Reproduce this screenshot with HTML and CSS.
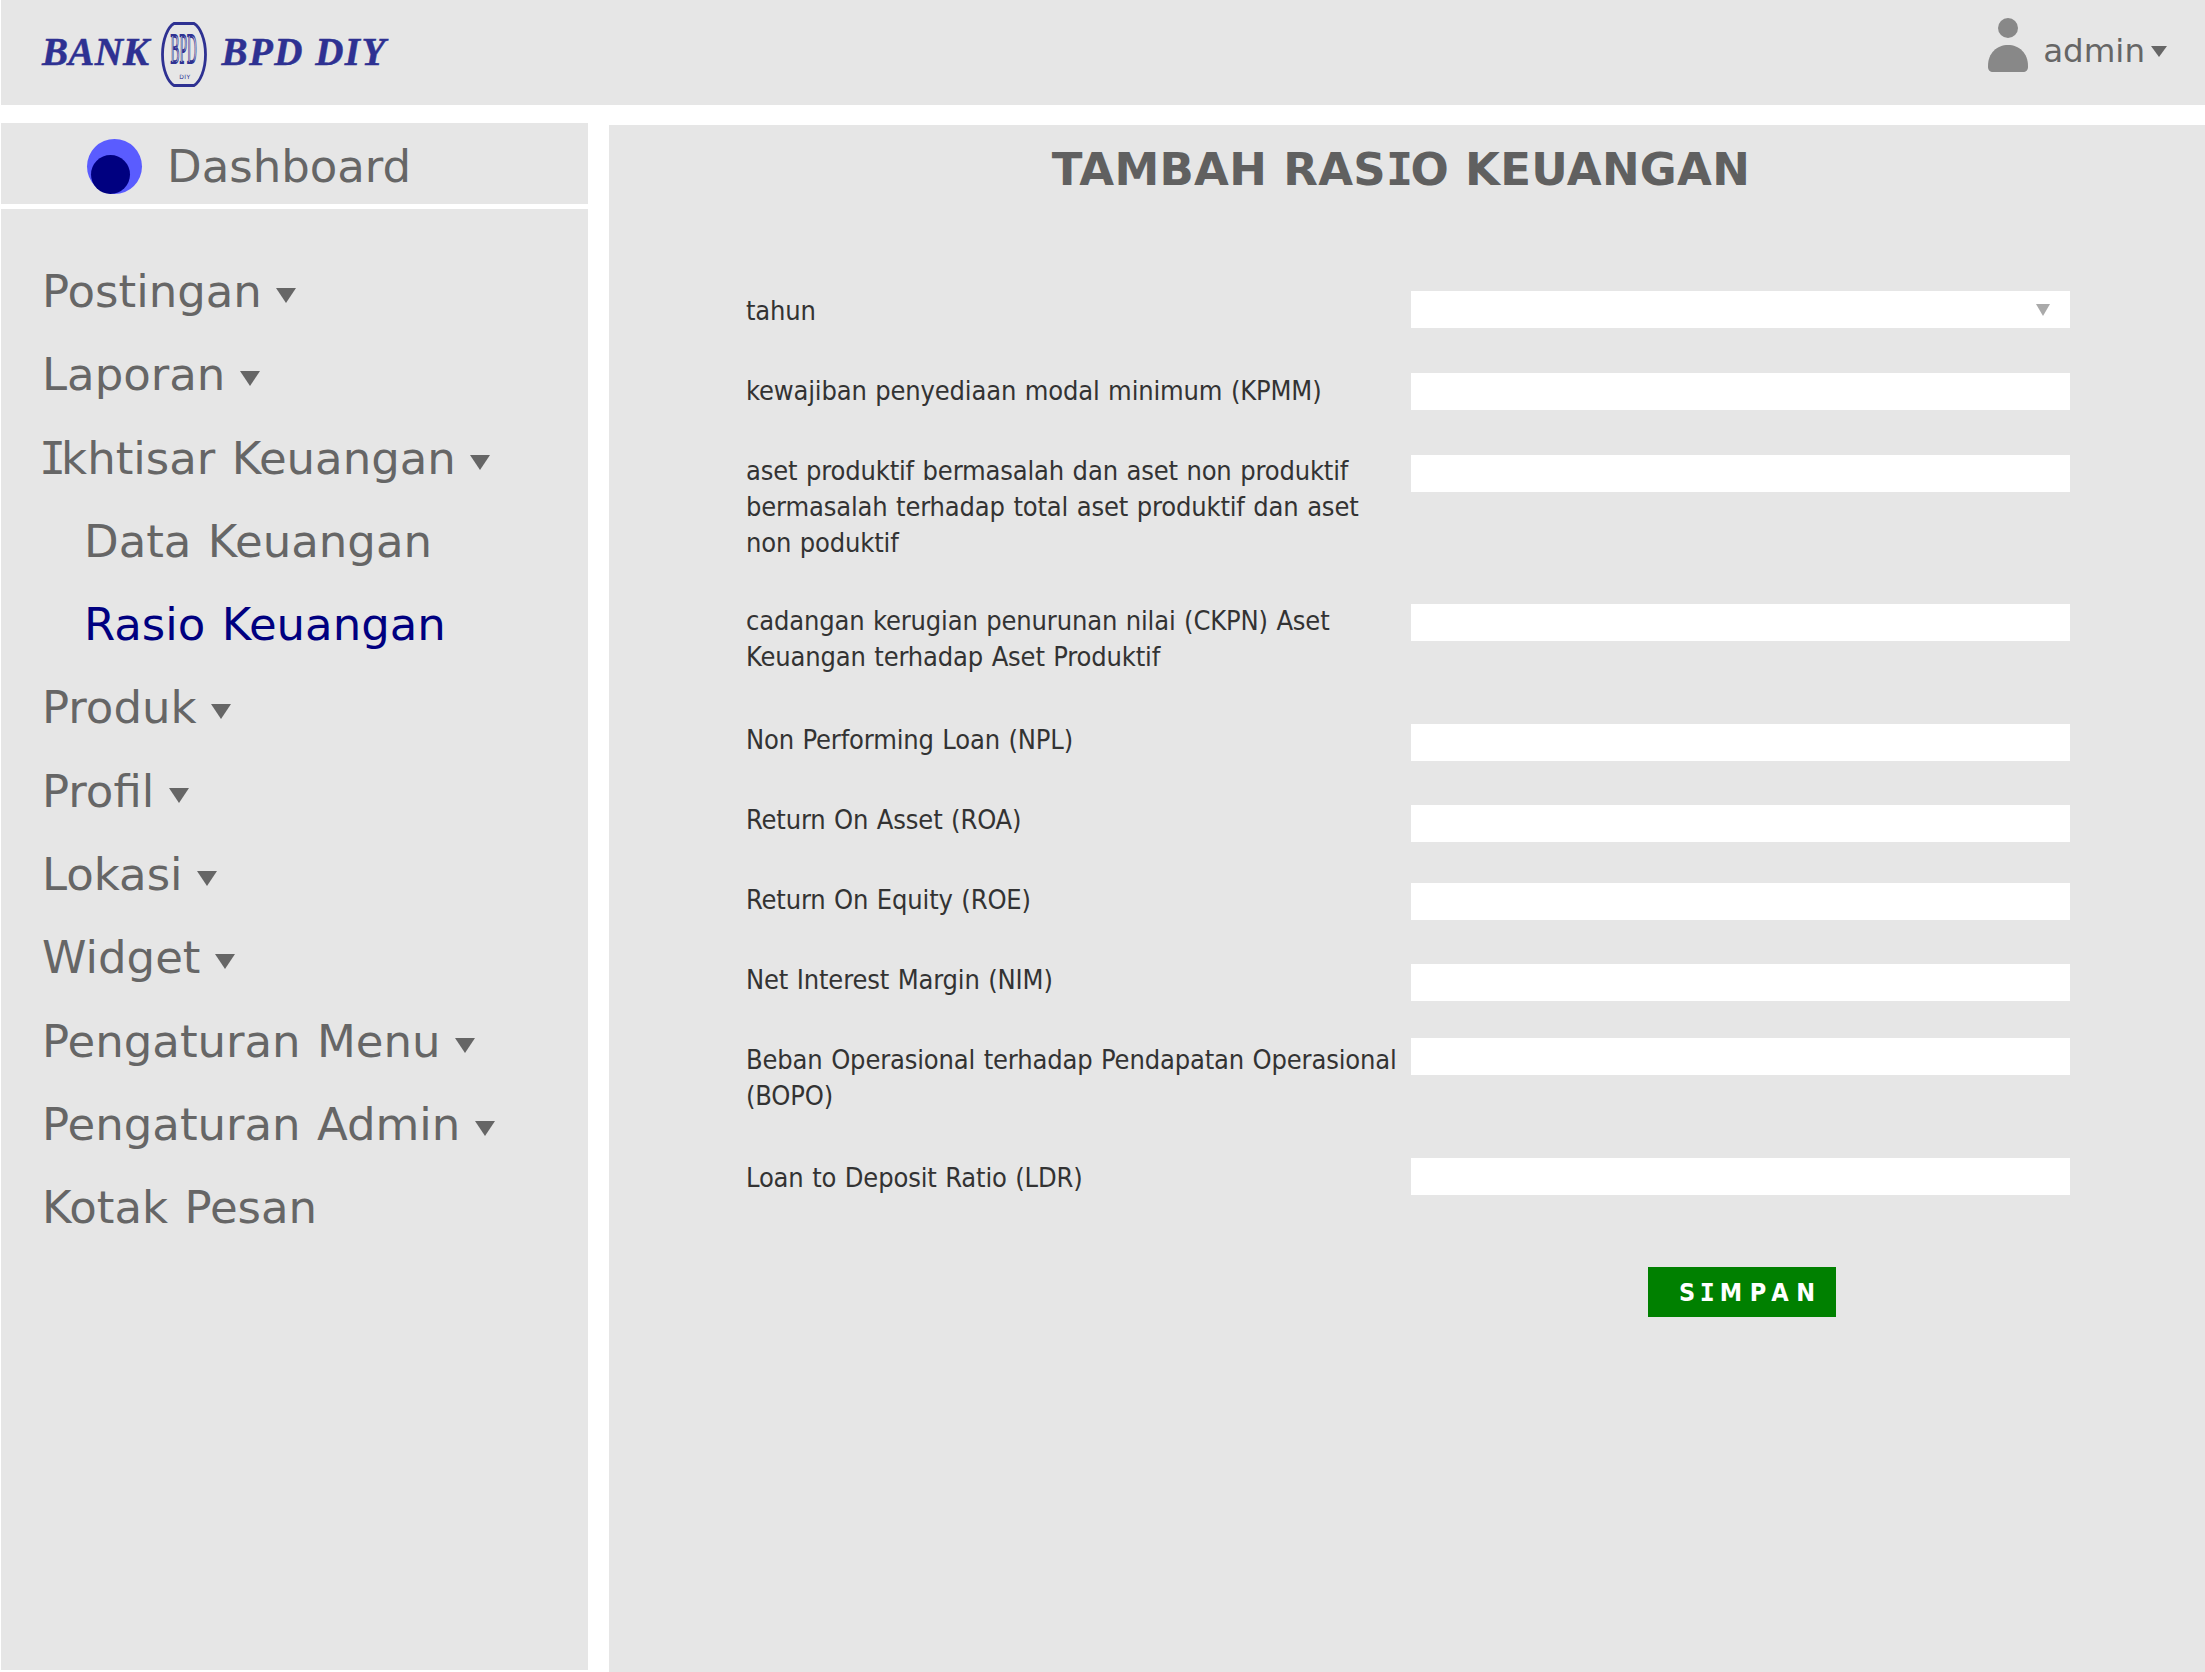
FILE: index.html
```html
<!DOCTYPE html>
<html lang="id">
<head>
<meta charset="utf-8">
<title>Tambah Rasio Keuangan</title>
<link rel="stylesheet" href="styles.css">
</head>
<body>
<header class="topbar">
  <div class="logo">
    <span class="logo-text logo-bank">BANK</span>
    <svg class="emblem" viewBox="0 0 46 65" width="46" height="65" aria-hidden="true">
      <path d="M13 1.500 H33 C39 5 44.500 17 44.500 32.500 C44.500 48 39 60 33 63.500 H13 C7 60 1.500 48 1.500 32.500 C1.500 17 7 5 13 1.500 Z" fill="none" stroke="#2e3192" stroke-width="2.800"/>
      <text class="emblem-bpd" x="0" y="0" transform="translate(9.500 41) scale(.56 1.800)">BPD</text>
      <text class="emblem-diy" x="24" y="57" text-anchor="middle">DIY</text>
    </svg>
    <span class="logo-text logo-name">BPD DIY</span>
  </div>
  <div class="user">
    <svg class="user-icon" viewBox="0 0 40 54" width="40" height="54" aria-hidden="true">
      <circle cx="20" cy="10" r="10" fill="#888"/>
      <path d="M0 48 C0 35 9 27 20 27 C31 27 40 35 40 48 V49 C40 52 38 54 35 54 H5 C2 54 0 52 0 49 Z" fill="#888"/>
    </svg>
    <span class="user-name">admin</span>
    <i class="caret caret-user"></i>
  </div>
</header>
<div class="layout">
  <aside class="side">
    <div class="dash">
      <span class="dash-dot"><span class="dash-dot-in"></span></span>
      <span>Dashboard</span>
    </div>
    <nav class="menu">
      <a class="menu-item">Postingan <i class="caret"></i></a>
      <a class="menu-item">Laporan <i class="caret"></i></a>
      <a class="menu-item"><span class="serif-i">I</span>khtisar Keuangan <i class="caret"></i></a>
      <a class="menu-item sub">Data Keuangan</a>
      <a class="menu-item sub active">Rasio Keuangan</a>
      <a class="menu-item">Produk <i class="caret"></i></a>
      <a class="menu-item">Profil <i class="caret"></i></a>
      <a class="menu-item">Lokasi <i class="caret"></i></a>
      <a class="menu-item">Widget <i class="caret"></i></a>
      <a class="menu-item">Pengaturan Menu <i class="caret"></i></a>
      <a class="menu-item">Pengaturan Admin <i class="caret"></i></a>
      <a class="menu-item">Kotak Pesan</a>
    </nav>
  </aside>
  <main class="main">
    <h1 class="title">TAMBAH RAS<span class="serif-i-bold">I</span>O KEUANGAN</h1>
    <form class="form">
      <div class="row">
        <label class="lbl">tahun</label>
        <div class="field select up-2"><i class="select-arrow"></i></div>
      </div>
      <div class="row">
        <label class="lbl">kewajiban penyediaan modal minimum (KPMM)</label>
        <div class="field"></div>
      </div>
      <div class="row gap-42">
        <label class="lbl">aset produktif bermasalah dan aset non produktif bermasalah terhadap total aset produktif dan aset non poduktif</label>
        <div class="field down-2"></div>
      </div>
      <div class="row gap-47">
        <label class="lbl">cadangan kerugian penurunan nilai (CKPN) Aset Keuangan terhadap Aset Produktif</label>
        <div class="field down-1"></div>
      </div>
      <div class="row">
        <label class="lbl">Non Performing Loan (NPL)</label>
        <div class="field down-2"></div>
      </div>
      <div class="row">
        <label class="lbl">Return On Asset (ROA)</label>
        <div class="field down-3"></div>
      </div>
      <div class="row">
        <label class="lbl">Return On Equity (ROE)</label>
        <div class="field down-1"></div>
      </div>
      <div class="row">
        <label class="lbl">Net Interest Margin (NIM)</label>
        <div class="field down-2"></div>
      </div>
      <div class="row gap-46">
        <label class="lbl">Beban Operasional terhadap Pendapatan Operasional (BOPO)</label>
        <div class="field up-4"></div>
      </div>
      <div class="row">
        <label class="lbl">Loan to Deposit Ratio (LDR)</label>
        <div class="field up-2"></div>
      </div>
      <div class="actions">
        <button class="save" type="button">S<span class="serif-i-btn">I</span>MPAN</button>
      </div>
    </form>
  </main>
</div>
</body>
</html>
```
FILE: styles.css
```css
* { box-sizing: border-box; }
html, body { margin: 0; height: 1672px; overflow: hidden; background: #fff; }
body { padding-left: 1px; font-family: "DejaVu Sans", sans-serif; color: #666; }

.topbar {
  height: 105px;
  background: #e6e6e6;
  display: flex;
  justify-content: space-between;
  padding: 0 38px 0 41px;
}
.logo { display: flex; align-items: flex-start; padding-top: 22px; }
.logo-text {
  font-family: "Liberation Serif", serif;
  font-weight: 700;
  font-style: italic;
  font-size: 39px;
  line-height: 60px;
  color: #2e3192;
  -webkit-text-stroke: .5px #2e3192;
}
.logo-bank { letter-spacing: .3px; margin-right: 12px; }
.logo-name { letter-spacing: 1.500px; margin-left: 14px; }
.emblem { display: block; }
.emblem-bpd { font-family: "Liberation Serif", serif; font-size: 24px; fill: none; stroke: #2e3192; stroke-width: 1px; }
.emblem-diy { font-family: "DejaVu Sans", sans-serif; font-size: 6px; letter-spacing: .5px; fill: #2e3192; }

.user { display: flex; align-items: flex-start; padding-top: 18px; }
.user-icon { display: block; margin-right: 15px; }
.user-name { font-size: 32.500px; line-height: 66px; margin-top: -18px; padding-top: 18px; }
.caret {
  display: inline-block;
  width: 0; height: 0;
  border-left: 10px solid transparent;
  border-right: 10px solid transparent;
  border-top: 15px solid #666;
  margin-left: -2px;
  vertical-align: 4px;
}
.caret-user {
  border-left-width: 8px; border-right-width: 8px; border-top-width: 11px;
  margin: 28px 0 0 6px;
}

.layout { display: grid; grid-template-columns: 587px 1fr; column-gap: 21px; margin-top: 18px; }

.side { display: flex; flex-direction: column; gap: 5px; }
.dash {
  height: 81px;
  background: #e6e6e6;
  display: flex;
  align-items: center;
  gap: 25px;
  padding: 5px 0 0 86px;
  font-size: 45px;
}
.dash-dot {
  width: 55px; height: 55px;
  border-radius: 50%;
  background: #5a5cff;
  display: flex;
  align-items: flex-end;
  padding-left: 4px;
}
.dash-dot-in { width: 39px; height: 39px; border-radius: 50%; background: #000080; }

.menu {
  height: 1461px;
  background: #e6e6e6;
  padding: 41px 0 0 41px;
  display: flex;
  flex-direction: column;
}
.menu-item { font-size: 45px; line-height: 83.300px; height: 83.300px; white-space: nowrap; color: #666; word-spacing: 2px; }
.sub { padding-left: 42px; }
.active { color: #000080; }
.serif-i { font-family: "DejaVu Sans Mono", monospace; letter-spacing: -5px; margin-left: -3px; }
.serif-i-bold { font-family: "DejaVu Sans Mono", monospace; letter-spacing: -2.500px; }
.serif-i-btn { font-family: "DejaVu Sans Mono", monospace; letter-spacing: 5px; margin-left: -3px; }

.main {
  margin-top: 2px;
  height: 1547px;
  background: #e6e6e6;
  padding: 0 0 0 137px;
}
.title {
  margin: 0;
  padding-right: 149px;
  text-align: center;
  font-size: 45px;
  line-height: 90px;
  font-weight: 700;
  letter-spacing: .3px;
  color: #606060;
}
.form { padding-top: 78px; width: 1324px; }
.row {
  display: grid;
  grid-template-columns: 665px 659px;
  align-items: start;
  margin-bottom: 44px;
}
.gap-42 { margin-bottom: 42px; }
.gap-46 { margin-bottom: 46px; }
.gap-47 { margin-bottom: 47px; }
.lbl {
  padding-right: 12px;
  font-family: "DejaVu Sans Condensed", "DejaVu Sans", sans-serif;
  font-stretch: condensed;
  font-size: 27px;
  line-height: 36px;
  letter-spacing: -.15px;
  word-spacing: 1px;
  color: #333;
}
.field { height: 37px; margin-bottom: -10px; background: #fff; position: relative; }
.up-2 { margin-top: -2px; }
.up-4 { margin-top: -4px; }
.down-1 { margin-top: 1px; }
.down-2 { margin-top: 2px; }
.down-3 { margin-top: 3px; }
.select-arrow {
  position: absolute;
  right: 20px; top: 13px;
  width: 0; height: 0;
  border-left: 7px solid transparent;
  border-right: 7px solid transparent;
  border-top: 12px solid #aaa;
}
.actions { display: grid; grid-template-columns: 665px 659px; }
.save {
  grid-column: 2;
  justify-self: center;
  height: 50px;
  width: 188px;
  border: 0;
  background: #008000;
  color: #fff;
  font-family: "DejaVu Sans Condensed", "DejaVu Sans", sans-serif;
  font-stretch: condensed;
  font-weight: 700;
  font-size: 25px;
  letter-spacing: 7.500px;
  padding: 0 10px 0 31px;
  text-align: left;
  white-space: nowrap;
  margin: 27px 0 0 3px;
}
```
